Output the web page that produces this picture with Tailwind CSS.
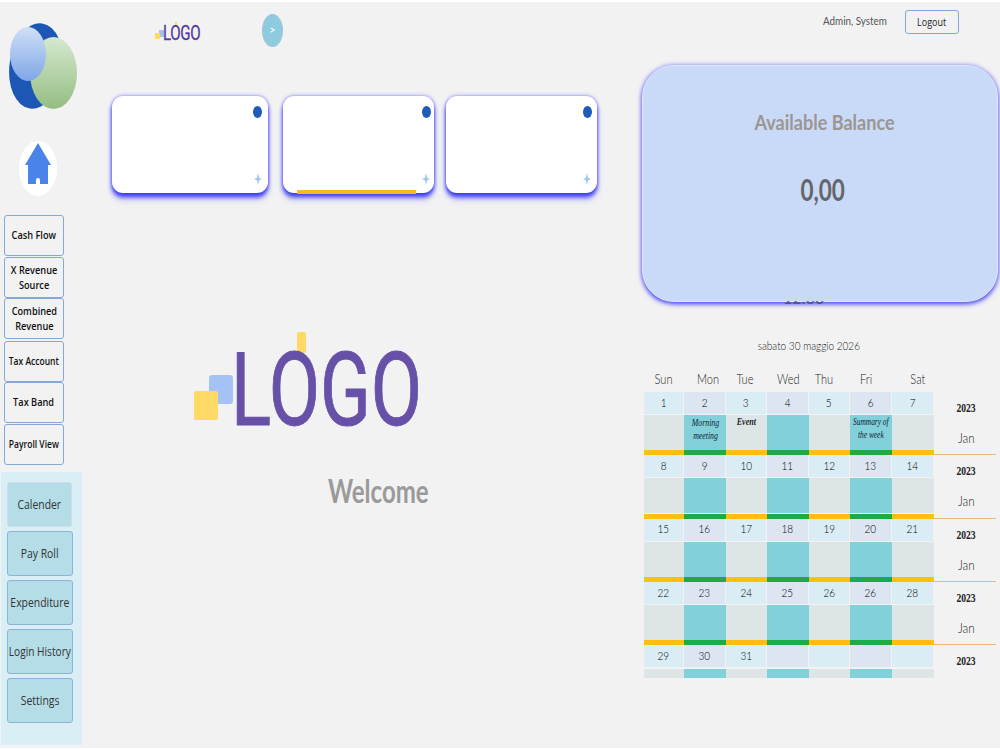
<!DOCTYPE html>
<html>
<head>
<meta charset="utf-8">
<script src="https://cdn.jsdelivr.net/npm/@tailwindcss/browser@4"></script>
</head>
<body class="bg-white">
<div class="relative mt-[2px] h-[746px] w-[1000px] overflow-hidden bg-[#f2f2f2] flex font-['Lato',sans-serif] text-[#444]">

  <!-- left column -->
  <aside class="w-[82px] shrink-0 flex flex-col">
    <svg class="ml-[9px] mt-[21px] shrink-0" width="68" height="86" viewBox="0 0 68 86">
      <defs>
        <linearGradient id="lb" x1="0" y1="0" x2="0" y2="1"><stop offset="0" stop-color="#cfe0f8"/><stop offset="1" stop-color="#7fa6e6"/></linearGradient>
        <linearGradient id="gr" x1="0" y1="0" x2="0" y2="1"><stop offset="0" stop-color="#d5e8d0"/><stop offset="1" stop-color="#95bd82"/></linearGradient>
      </defs>
      <ellipse cx="27" cy="43" rx="26.5" ry="43" fill="#1c57b5" transform="rotate(8 27 43)"/>
      <ellipse cx="44.5" cy="50" rx="23.5" ry="36" fill="url(#gr)"/>
      <ellipse cx="19" cy="31" rx="18" ry="27" fill="url(#lb)"/>
    </svg>
    <div class="ml-[19px] mt-[32px] w-[38px] h-[55px] shrink-0 rounded-[50%] bg-white flex items-start justify-center pt-[2px]">
      <svg width="28" height="42" viewBox="0 0 28 42">
        <path d="M14 0L27 22H24V41H16V37Q16 35 14 35Q12 35 12 37V41H4V22H1Z" fill="#4a84e8"/>
      </svg>
    </div>
    <nav class="mt-[19px] ml-[4px] w-[60px] flex flex-col text-[11.5px] leading-[15px] font-['Open_Sans',sans-serif] font-semibold text-[#111]">
      <button class="h-[41px] mb-px pb-[2px] flex items-center justify-center text-center border border-[#85a9d6] rounded-[3px]"><span class="inline-block whitespace-nowrap scale-x-[0.8]">Cash Flow</span></button>
      <button class="h-[41px] pb-[2px] flex items-center justify-center text-center border border-[#85a9d6] rounded-[3px]"><span class="inline-block whitespace-nowrap scale-x-[0.8]">X Revenue<br>Source</span></button>
      <button class="h-[41px] mb-[2px] pb-[2px] flex items-center justify-center text-center border border-[#85a9d6] rounded-[3px]"><span class="inline-block whitespace-nowrap scale-x-[0.8]">Combined<br>Revenue</span></button>
      <button class="h-[41px] pb-[2px] flex items-center justify-center text-center border border-[#85a9d6] rounded-[3px]"><span class="inline-block whitespace-nowrap scale-x-[0.74]">Tax Account</span></button>
      <button class="h-[41px] mb-px pb-[2px] flex items-center justify-center text-center border border-[#85a9d6] rounded-[3px]"><span class="inline-block whitespace-nowrap scale-x-[0.8]">Tax Band</span></button>
      <button class="h-[41px] pb-[2px] flex items-center justify-center text-center border border-[#85a9d6] rounded-[3px]"><span class="inline-block whitespace-nowrap scale-x-[0.74]">Payroll View</span></button>
    </nav>
    <nav class="mt-[7px] ml-px w-[81px] h-[273px] bg-[#daeef5] pt-[10px] pl-[6px] flex flex-col gap-[4px] text-[13px] font-['Open_Sans',sans-serif] text-[#333]">
      <button class="w-[65px] h-[45px] shrink-0 flex items-center justify-center bg-[#b5dde8] rounded-[3px] border border-[#cfdcec]"><span class="inline-block whitespace-nowrap scale-x-[0.8]">Calender</span></button>
      <button class="w-[66px] h-[45px] shrink-0 flex items-center justify-center bg-[#b5dde8] rounded-[3px] border border-[#8db4d6]"><span class="inline-block whitespace-nowrap scale-x-[0.8]">Pay Roll</span></button>
      <button class="w-[66px] h-[45px] shrink-0 flex items-center justify-center bg-[#b5dde8] rounded-[3px] border border-[#8db4d6]"><span class="inline-block whitespace-nowrap scale-x-[0.8]">Expenditure</span></button>
      <button class="w-[66px] h-[45px] shrink-0 flex items-center justify-center bg-[#b5dde8] rounded-[3px] border border-[#8db4d6]"><span class="inline-block whitespace-nowrap scale-x-[0.78]">Login History</span></button>
      <button class="w-[66px] h-[45px] shrink-0 flex items-center justify-center bg-[#b5dde8] rounded-[3px] border border-[#8db4d6]"><span class="inline-block whitespace-nowrap scale-x-[0.8]">Settings</span></button>
    </nav>
  </aside>

  <!-- centre column -->
  <main class="w-[550px] shrink-0 flex flex-col">
    <header class="h-[45px] mt-[8px] flex items-center">
      <div class="relative ml-[73px] w-[44px] h-[22px] shrink-0">
        <span class="absolute left-0 top-[11px] w-[5px] h-[6px] bg-[#ffd966] z-10"></span>
        <span class="absolute left-[4px] top-[8px] w-[5px] h-[7px] bg-[#a4c2f4]"></span>
        <span class="absolute left-[20px] top-0 w-[2px] h-[4px] bg-[#ffd966]"></span>
        <span class="absolute left-[8px] top-[-1px] text-[21px] leading-[24px] text-[#54399e] font-['Roboto',sans-serif] origin-left scale-x-[0.72] tracking-[-0.5px] [-webkit-text-stroke:0.3px_#54399e]">LOGO</span>
      </div>
      <button class="ml-[63px] w-[21px] h-[33px] shrink-0 rounded-[50%] bg-[#8fcbdf] border border-[#9fc5dc] text-white text-[11px] mb-[4px]">&gt;</button>
    </header>

    <section class="mt-[41px] ml-[30px] flex">
      <div class="relative w-[156px] h-[97px] bg-white rounded-[11px] shadow-[0_4px_4px_#3c3cf5,0_0_3px_#8888f5,0_7px_6px_#c4c4f8,0_-1px_4px_#d4d4f7]">
        <span class="absolute right-[6px] top-[10px] w-[9px] h-[12px] rounded-[50%] bg-[#1f5bb8]"></span>
        <svg class="absolute right-[6px] bottom-[8px]" width="8" height="12" viewBox="0 0 8 12"><path d="M4 0L5.2 4.8L8 6L5.2 7.2L4 12L2.8 7.2L0 6L2.8 4.8Z" fill="#a6c8ee"/></svg>
      </div>
      <div class="relative ml-[15px] w-[151px] h-[97px] bg-white rounded-[11px] shadow-[0_4px_4px_#3c3cf5,0_0_3px_#8888f5,0_7px_6px_#c4c4f8,0_-1px_4px_#d4d4f7]">
        <span class="absolute right-[3px] top-[10px] w-[9px] h-[12px] rounded-[50%] bg-[#1f5bb8]"></span>
        <svg class="absolute right-[4px] bottom-[8px]" width="8" height="12" viewBox="0 0 8 12"><path d="M4 0L5.2 4.8L8 6L5.2 7.2L4 12L2.8 7.2L0 6L2.8 4.8Z" fill="#a6c8ee"/></svg>
        <span class="absolute left-[14px] bottom-[-1px] w-[119px] h-[4px] bg-[#f5b921]"></span>
      </div>
      <div class="relative ml-[12px] w-[151px] h-[97px] bg-white rounded-[11px] shadow-[0_4px_4px_#3c3cf5,0_0_3px_#8888f5,0_7px_6px_#c4c4f8,0_-1px_4px_#d4d4f7]">
        <span class="absolute right-[5px] top-[10px] w-[9px] h-[12px] rounded-[50%] bg-[#1f5bb8]"></span>
        <svg class="absolute right-[6px] bottom-[8px]" width="8" height="12" viewBox="0 0 8 12"><path d="M4 0L5.2 4.8L8 6L5.2 7.2L4 12L2.8 7.2L0 6L2.8 4.8Z" fill="#a6c8ee"/></svg>
      </div>
    </section>

    <div class="relative mt-[139px] ml-[112px] w-[224px] h-[94px] shrink-0">
      <span class="absolute left-0 top-[59px] w-[24px] h-[29px] rounded-[2px] bg-[#ffd966] z-10"></span>
      <span class="absolute left-[15px] top-[43px] w-[24px] h-[29px] rounded-[3px] bg-[#a4c2f4]"></span>
      <span class="absolute left-[103px] top-0 w-[9px] h-[21px] rounded-[2px] bg-[#ffd966]"></span>
      <span class="absolute left-[37px] top-[6px] text-[102px] leading-[104px] text-[#6750a8] font-['Roboto',sans-serif] origin-left scale-x-[0.73] whitespace-nowrap [-webkit-text-stroke:1px_#6750a8]">LOGO</span>
    </div>
    <div class="mt-[47px] ml-[246px] text-[32px] leading-[36px] font-bold text-[#9a9a9a] origin-left scale-x-[0.75] whitespace-nowrap">Welcome</div>
  </main>

  <!-- right column -->
  <section class="w-[368px] shrink-0 flex flex-col pl-[10px]">
    <div class="h-[63px] shrink-0 flex items-start">
      <span class="ml-[181px] mt-[11px] w-[63px] text-[12px] leading-[16px] text-[#555] whitespace-nowrap origin-left scale-x-[0.82]">Admin, System</span>
      <button class="ml-[19px] mt-[8px] w-[54px] h-[24px] bg-[#f2f2f2] border border-[#7da7d9] rounded-[3px] text-[11.5px] text-[#222] font-['Open_Sans',sans-serif]"><span class="inline-block scale-x-[0.78]">Logout</span></button>
    </div>
    <div class="relative h-[237px] shrink-0 w-[356px]">
      <div class="absolute inset-0 rounded-[32px] bg-[#c9daf8] border border-[#e1e8fb] shadow-[0_2px_5px_#3c3cf5,0_-1px_4px_#c9c9f7] flex flex-col items-center">
        <span class="ml-[10px] mt-[42px] text-[21px] leading-[28px] font-bold text-[#9b9692] whitespace-nowrap scale-x-[0.86]">Available Balance</span>
        <span class="ml-[6px] mt-[35px] text-[30px] leading-[36px] font-bold text-[#666] scale-x-[0.75]">0,00</span>
      </div>
      <div class="absolute left-[141px] top-[236px] w-[46px] h-[3px] overflow-hidden z-10 text-[16px] leading-[20px] font-bold text-[#444]/70"><span class="block mt-[-13px]">12:00</span></div>
    </div>
    <div class="mt-[36px] ml-[-17.5px] w-[368px] text-center text-[12.5px] leading-[16px] text-[#222] font-light"><span class="inline-block whitespace-nowrap scale-x-[0.8]">sabato 30 maggio 2026</span></div>

    <div class="mt-[17px] ml-[2px] grid grid-cols-[40px_42px_41px_42px_41px_42px_42px_62px] text-[#222] text-[13px] leading-[16px] font-light [&>div]:h-[16px]">
      <div class="text-center"><span class="inline-block scale-x-[0.85]">Sun</span></div>
      <div class="text-center pl-[6px]"><span class="inline-block scale-x-[0.85]">Mon</span></div>
      <div class="text-center pr-[4px]"><span class="inline-block scale-x-[0.85]">Tue</span></div>
      <div class="text-center"><span class="inline-block scale-x-[0.85]">Wed</span></div>
      <div class="text-center pr-[11px]"><span class="inline-block scale-x-[0.85]">Thu</span></div>
      <div class="text-center pr-[10px]"><span class="inline-block scale-x-[0.85]">Fri</span></div>
      <div class="text-center pl-[9px]"><span class="inline-block scale-x-[0.85]">Sat</span></div>
      <div></div>
    </div>

    <!-- Calendar weeks -->
    <div class="mt-[5px] ml-[2px] w-[352px] h-[286px] overflow-hidden flex flex-col text-black text-[12.5px] font-light">
      <div class="grid grid-cols-[40px_42px_41px_42px_41px_42px_42px_62px] h-[63.33px] shrink-0">
        <div class="bg-[#daedf4] h-[22px] mr-px flex items-center justify-center"><span class="scale-x-[0.8]">1</span></div><div class="bg-[#dce5f2] h-[22px] mr-px flex items-center justify-center"><span class="scale-x-[0.8]">2</span></div><div class="bg-[#daedf4] h-[22px] mr-px flex items-center justify-center"><span class="scale-x-[0.8]">3</span></div><div class="bg-[#dce5f2] h-[22px] mr-px flex items-center justify-center"><span class="scale-x-[0.8]">4</span></div><div class="bg-[#daedf4] h-[22px] mr-px flex items-center justify-center"><span class="scale-x-[0.8]">5</span></div><div class="bg-[#dce5f2] h-[22px] mr-px flex items-center justify-center"><span class="scale-x-[0.8]">6</span></div><div class="bg-[#daedf4] h-[22px] mr-px flex items-center justify-center"><span class="scale-x-[0.8]">7</span></div>
        <div class="row-span-3 flex flex-col items-center pl-[2px] text-[#222] border-b border-[#edb880]"><span class="mt-[8px] font-['Liberation_Serif',serif] font-bold text-[12px] leading-[16px] scale-x-[0.8]">2023</span><span class="mt-[14px] text-[13px] text-[#222] leading-[16px] scale-x-[0.9]">Jan</span></div>
        <div class="h-[35px] mt-px bg-[#dde5e7]"></div><div class="h-[35px] mt-px pt-px flex justify-center bg-[#82d0da] text-center font-['Liberation_Serif',serif] font-normal italic text-[10px] leading-[13px] text-[#123] whitespace-nowrap"><span class="scale-x-[0.78]">Morning<br>meeting</span></div><div class="h-[35px] mt-px pt-px flex justify-center bg-[#dde5e7] text-center font-['Liberation_Serif',serif] italic font-bold text-[9.5px] leading-[13px] text-[#222]"><span class="scale-x-[0.85]">Event</span></div><div class="h-[35px] mt-px bg-[#82d0da]"></div><div class="h-[35px] mt-px bg-[#dde5e7]"></div><div class="h-[35px] mt-px pt-px flex justify-center bg-[#82d0da] text-center font-['Liberation_Serif',serif] font-normal italic text-[9.5px] leading-[13px] text-[#123] whitespace-nowrap"><span class="scale-x-[0.78]">Summary of<br>the week</span></div><div class="h-[35px] mt-px bg-[#dde5e7]"></div>
        <div class="h-[5px] bg-[#ffbf0f]"></div><div class="h-[5px] bg-[#1fa94a]"></div><div class="h-[5px] bg-[#ffbf0f]"></div><div class="h-[5px] bg-[#1fa94a]"></div><div class="h-[5px] bg-[#ffbf0f]"></div><div class="h-[5px] bg-[#1fa94a]"></div><div class="h-[5px] bg-[#ffbf0f]"></div>
      </div>
      <div class="grid grid-cols-[40px_42px_41px_42px_41px_42px_42px_62px] h-[63.33px] shrink-0">
        <div class="bg-[#daedf4] h-[22px] mr-px flex items-center justify-center"><span class="scale-x-[0.8]">8</span></div><div class="bg-[#dce5f2] h-[22px] mr-px flex items-center justify-center"><span class="scale-x-[0.8]">9</span></div><div class="bg-[#daedf4] h-[22px] mr-px flex items-center justify-center"><span class="scale-x-[0.8]">10</span></div><div class="bg-[#dce5f2] h-[22px] mr-px flex items-center justify-center"><span class="scale-x-[0.8]">11</span></div><div class="bg-[#daedf4] h-[22px] mr-px flex items-center justify-center"><span class="scale-x-[0.8]">12</span></div><div class="bg-[#dce5f2] h-[22px] mr-px flex items-center justify-center"><span class="scale-x-[0.8]">13</span></div><div class="bg-[#daedf4] h-[22px] mr-px flex items-center justify-center"><span class="scale-x-[0.8]">14</span></div>
        <div class="row-span-3 flex flex-col items-center pl-[2px] text-[#222] border-b border-[#edb880]"><span class="mt-[8px] font-['Liberation_Serif',serif] font-bold text-[12px] leading-[16px] scale-x-[0.8]">2023</span><span class="mt-[14px] text-[13px] text-[#222] leading-[16px] scale-x-[0.9]">Jan</span></div>
        <div class="h-[35px] mt-px bg-[#dde5e7]"></div><div class="h-[35px] mt-px bg-[#82d0da]"></div><div class="h-[35px] mt-px bg-[#dde5e7]"></div><div class="h-[35px] mt-px bg-[#82d0da]"></div><div class="h-[35px] mt-px bg-[#dde5e7]"></div><div class="h-[35px] mt-px bg-[#82d0da]"></div><div class="h-[35px] mt-px bg-[#dde5e7]"></div>
        <div class="h-[5px] bg-[#ffbf0f]"></div><div class="h-[5px] bg-[#1fa94a]"></div><div class="h-[5px] bg-[#ffbf0f]"></div><div class="h-[5px] bg-[#1fa94a]"></div><div class="h-[5px] bg-[#ffbf0f]"></div><div class="h-[5px] bg-[#1fa94a]"></div><div class="h-[5px] bg-[#ffbf0f]"></div>
      </div>
      <div class="grid grid-cols-[40px_42px_41px_42px_41px_42px_42px_62px] h-[63.33px] shrink-0">
        <div class="bg-[#daedf4] h-[22px] mr-px flex items-center justify-center"><span class="scale-x-[0.8]">15</span></div><div class="bg-[#dce5f2] h-[22px] mr-px flex items-center justify-center"><span class="scale-x-[0.8]">16</span></div><div class="bg-[#daedf4] h-[22px] mr-px flex items-center justify-center"><span class="scale-x-[0.8]">17</span></div><div class="bg-[#dce5f2] h-[22px] mr-px flex items-center justify-center"><span class="scale-x-[0.8]">18</span></div><div class="bg-[#daedf4] h-[22px] mr-px flex items-center justify-center"><span class="scale-x-[0.8]">19</span></div><div class="bg-[#dce5f2] h-[22px] mr-px flex items-center justify-center"><span class="scale-x-[0.8]">20</span></div><div class="bg-[#daedf4] h-[22px] mr-px flex items-center justify-center"><span class="scale-x-[0.8]">21</span></div>
        <div class="row-span-3 flex flex-col items-center pl-[2px] text-[#222] border-b border-[#edb880]"><span class="mt-[8px] font-['Liberation_Serif',serif] font-bold text-[12px] leading-[16px] scale-x-[0.8]">2023</span><span class="mt-[14px] text-[13px] text-[#222] leading-[16px] scale-x-[0.9]">Jan</span></div>
        <div class="h-[35px] mt-px bg-[#dde5e7]"></div><div class="h-[35px] mt-px bg-[#82d0da]"></div><div class="h-[35px] mt-px bg-[#dde5e7]"></div><div class="h-[35px] mt-px bg-[#82d0da]"></div><div class="h-[35px] mt-px bg-[#dde5e7]"></div><div class="h-[35px] mt-px bg-[#82d0da]"></div><div class="h-[35px] mt-px bg-[#dde5e7]"></div>
        <div class="h-[5px] bg-[#ffbf0f]"></div><div class="h-[5px] bg-[#1fa94a]"></div><div class="h-[5px] bg-[#ffbf0f]"></div><div class="h-[5px] bg-[#1fa94a]"></div><div class="h-[5px] bg-[#ffbf0f]"></div><div class="h-[5px] bg-[#1fa94a]"></div><div class="h-[5px] bg-[#ffbf0f]"></div>
      </div>
      <div class="grid grid-cols-[40px_42px_41px_42px_41px_42px_42px_62px] h-[63.33px] shrink-0">
        <div class="bg-[#daedf4] h-[22px] mr-px flex items-center justify-center"><span class="scale-x-[0.8]">22</span></div><div class="bg-[#dce5f2] h-[22px] mr-px flex items-center justify-center"><span class="scale-x-[0.8]">23</span></div><div class="bg-[#daedf4] h-[22px] mr-px flex items-center justify-center"><span class="scale-x-[0.8]">24</span></div><div class="bg-[#dce5f2] h-[22px] mr-px flex items-center justify-center"><span class="scale-x-[0.8]">25</span></div><div class="bg-[#daedf4] h-[22px] mr-px flex items-center justify-center"><span class="scale-x-[0.8]">26</span></div><div class="bg-[#dce5f2] h-[22px] mr-px flex items-center justify-center"><span class="scale-x-[0.8]">26</span></div><div class="bg-[#daedf4] h-[22px] mr-px flex items-center justify-center"><span class="scale-x-[0.8]">28</span></div>
        <div class="row-span-3 flex flex-col items-center pl-[2px] text-[#222] border-b border-[#edb880]"><span class="mt-[8px] font-['Liberation_Serif',serif] font-bold text-[12px] leading-[16px] scale-x-[0.8]">2023</span><span class="mt-[14px] text-[13px] text-[#222] leading-[16px] scale-x-[0.9]">Jan</span></div>
        <div class="h-[35px] mt-px bg-[#dde5e7]"></div><div class="h-[35px] mt-px bg-[#82d0da]"></div><div class="h-[35px] mt-px bg-[#dde5e7]"></div><div class="h-[35px] mt-px bg-[#82d0da]"></div><div class="h-[35px] mt-px bg-[#dde5e7]"></div><div class="h-[35px] mt-px bg-[#82d0da]"></div><div class="h-[35px] mt-px bg-[#dde5e7]"></div>
        <div class="h-[5px] bg-[#ffbf0f]"></div><div class="h-[5px] bg-[#1fa94a]"></div><div class="h-[5px] bg-[#ffbf0f]"></div><div class="h-[5px] bg-[#1fa94a]"></div><div class="h-[5px] bg-[#ffbf0f]"></div><div class="h-[5px] bg-[#1fa94a]"></div><div class="h-[5px] bg-[#ffbf0f]"></div>
      </div>
      <div class="grid grid-cols-[40px_42px_41px_42px_41px_42px_42px_62px] h-[33px] shrink-0 overflow-hidden">
        <div class="bg-[#daedf4] h-[22px] mr-px flex items-center justify-center"><span class="scale-x-[0.8]">29</span></div><div class="bg-[#dce5f2] h-[22px] mr-px flex items-center justify-center"><span class="scale-x-[0.8]">30</span></div><div class="bg-[#daedf4] h-[22px] mr-px flex items-center justify-center"><span class="scale-x-[0.8]">31</span></div><div class="bg-[#dce5f2] h-[22px] mr-px"></div><div class="bg-[#daedf4] h-[22px] mr-px"></div><div class="bg-[#dce5f2] h-[22px] mr-px"></div><div class="bg-[#daedf4] h-[22px] mr-px"></div>
        <div class="row-span-2 flex flex-col items-center pl-[2px] text-[#222]"><span class="mt-[8px] font-['Liberation_Serif',serif] font-bold text-[12px] leading-[16px] scale-x-[0.8]">2023</span></div>
        <div class="h-[9px] mt-px bg-[#dde5e7]"></div><div class="h-[9px] mt-px bg-[#82d0da]"></div><div class="h-[9px] mt-px bg-[#dde5e7]"></div><div class="h-[9px] mt-px bg-[#82d0da]"></div><div class="h-[9px] mt-px bg-[#dde5e7]"></div><div class="h-[9px] mt-px bg-[#82d0da]"></div><div class="h-[9px] mt-px bg-[#dde5e7]"></div>
      </div>
    </div>
  </section>
</div>
</body>
</html>
